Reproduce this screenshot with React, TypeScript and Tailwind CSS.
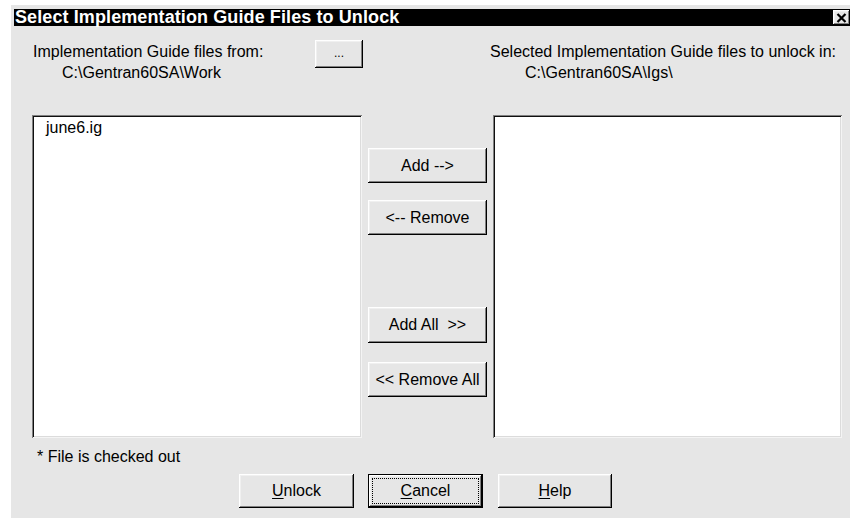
import React from "react";

const raised =
  "bg-[#e6e6e6] shadow-[inset_-1px_-1px_0_#000,inset_1px_1px_0_#fff,inset_-2px_-2px_0_#808080,inset_2px_2px_0_#f0f0f0]";
const sunken =
  "bg-white shadow-[inset_1px_1px_0_#808080,inset_-1px_-1px_0_#f4f4f4,inset_2px_2px_0_#101010,inset_-2px_-2px_0_#dcdcdc]";

const Btn = ({ className = "", children }: { className?: string; children: React.ReactNode }) => (
  <div className={`${raised} flex items-center justify-center text-[16px] leading-[18px] text-black ${className}`}>
    {children}
  </div>
);

const App = () => {
  return (
    <div
      className="w-[850px] h-[518px] bg-white overflow-hidden"
      style={{ fontFamily: '"Liberation Sans", Arial, sans-serif' }}
    >
      <div className="ml-[11px] mt-[5px] h-[513px] bg-[#e6e6e6] pt-[4px] pl-[3px] flex flex-col">
        {/* title bar */}
        <div className="h-[17px] bg-black flex items-center justify-between pl-[1px]">
          <span className="text-white font-bold text-[18px] leading-[17px] tracking-[0.1px]">
            Select Implementation Guide Files to Unlock
          </span>
          <div className={`${raised} w-[17px] h-[15px] flex items-center justify-center`}>
            <svg width="11" height="10" viewBox="0 0 11 10">
              <path d="M1.5 1 L9.5 9 M9.5 1 L1.5 9" stroke="#000" strokeWidth="2.2" />
            </svg>
          </div>
        </div>

        <div className="pl-[18px] flex flex-col text-black text-[16px]">
          {/* header labels */}
          <div className="h-[89px] flex">
            <div className="w-[330px] mt-[14px] flex items-start justify-between">
              <div className="flex flex-col pl-[1px]">
                <span className="mt-[3px] leading-[18px]">Implementation Guide files from:</span>
                <span className="mt-[3px] leading-[18px] pl-[29px]">C:\Gentran60SA\Work</span>
              </div>
              <Btn className="w-[48px] h-[28px] mr-[-1px]">
                <span className="text-[12px] leading-[12px] -mt-[2px]">...</span>
              </Btn>
            </div>
            <div className="ml-[128px] mt-[17px] flex flex-col">
              <span className="leading-[18px]">Selected Implementation Guide files to unlock in:</span>
              <span className="mt-[3px] leading-[18px] pl-[35px]">C:\Gentran60SA\Igs\</span>
            </div>
          </div>

          {/* lists and move buttons */}
          <div className="h-[323px] flex">
            <div className={`${sunken} w-[330px] h-full pt-[4px] pl-[14px]`}>
              <div className="leading-[18px]">june6.ig</div>
            </div>
            <div className="w-[119px] ml-[6px] flex flex-col">
              <Btn className="mt-[33px] h-[35px]">Add --&gt;</Btn>
              <Btn className="mt-[17px] h-[35px]">&lt;-- Remove</Btn>
              <Btn className="mt-[72px] h-[36px]">Add All &nbsp;&gt;&gt;</Btn>
              <Btn className="mt-[19px] h-[35px]">&lt;&lt; Remove All</Btn>
            </div>
            <div className={`${sunken} w-[349px] h-full ml-[6px]`} />
          </div>

          {/* footer */}
          <div className="mt-[10px] pl-[5px] leading-[18px]">* File is checked out</div>
          <div className="mt-[8px] pl-[207px] flex">
            <Btn className="w-[115px] h-[34px]">
              <span>
                <span className="underline underline-offset-[2px]">U</span>nlock
              </span>
            </Btn>
            <div className="ml-[14px] w-[115px] h-[34px] border border-black">
              <Btn className="w-full h-full relative">
                <div className="absolute inset-[3px] border border-dotted border-black" />
                <span>
                  <span className="underline underline-offset-[2px]">C</span>ancel
                </span>
              </Btn>
            </div>
            <Btn className="ml-[15px] w-[114px] h-[34px]">
              <span>
                <span className="underline underline-offset-[2px]">H</span>elp
              </span>
            </Btn>
          </div>
        </div>
      </div>
    </div>
  );
};

export default App;
